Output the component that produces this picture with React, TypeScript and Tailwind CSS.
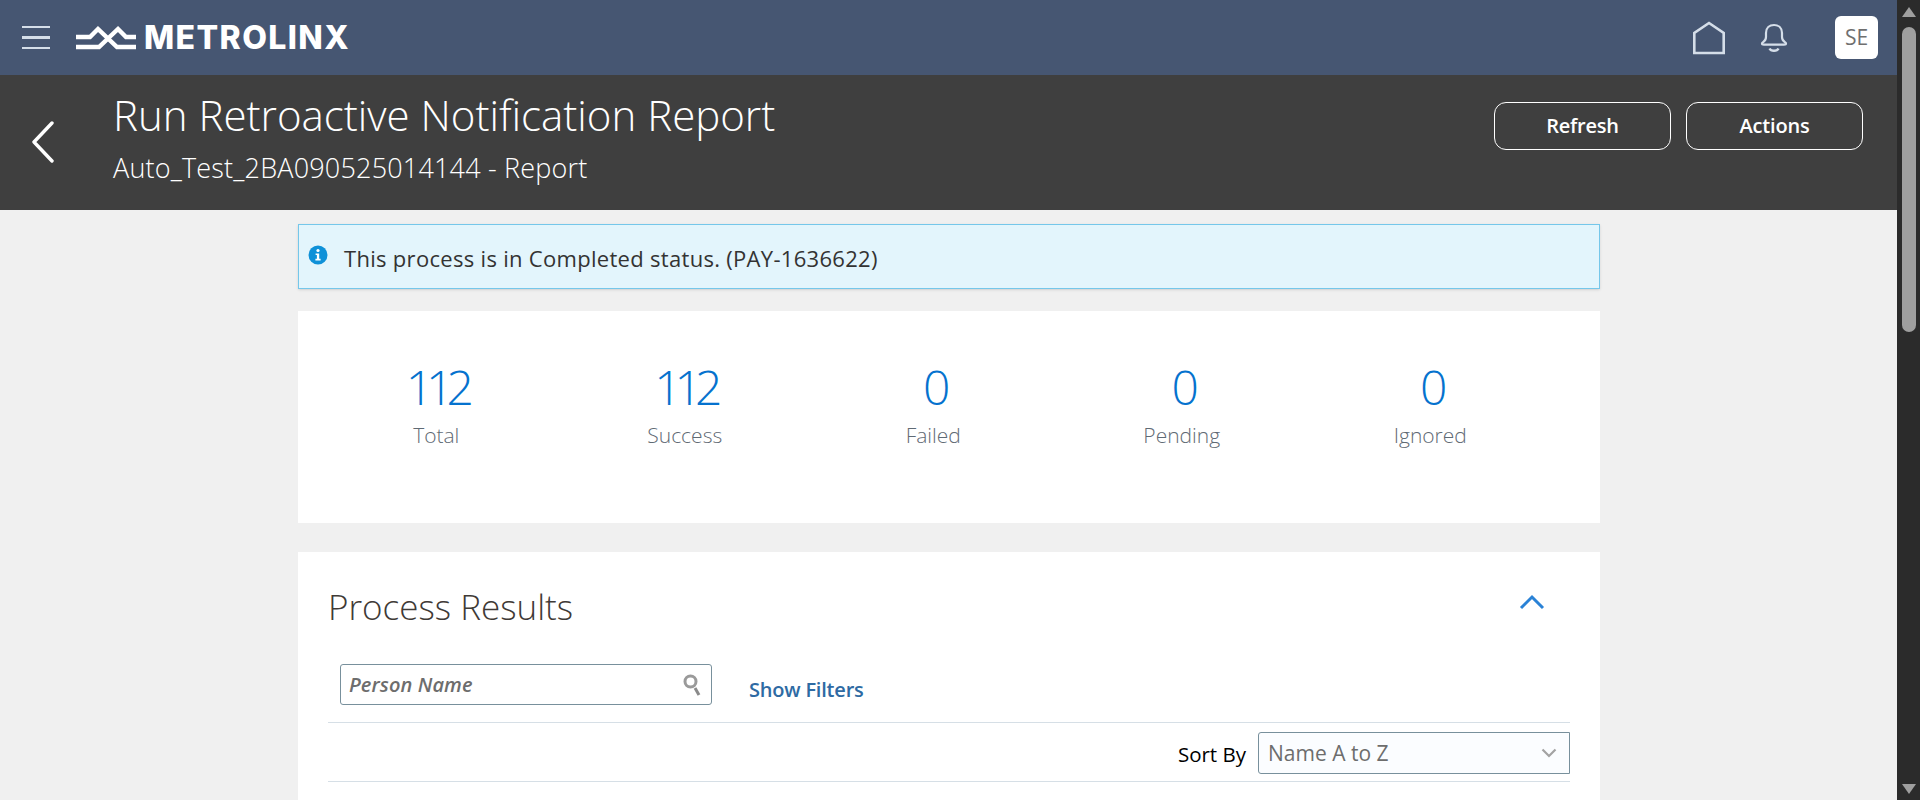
import React from "react";

function Logo() {
  return (
    <svg width="60" height="26" viewBox="0 0 60 26" fill="none" stroke="white" strokeWidth="4.4" className="shrink-0">
      <path d="M0 12 H14 L22 4 L41 22 H60" />
      <path d="M0 22 H23 L42 4 L50 12 H60" />
    </svg>
  );
}

function Stat({ value, label }: { value: string; label: string }) {
  return (
    <div className="w-[248.5px] flex flex-col items-center">
      <div className="text-[48px] leading-[56px] font-light tracking-[-7px] text-[#0572ce]">{value}</div>
      <div className="text-[21px] leading-[30px] font-light text-[#5f6a74] mt-[5px]">{label}</div>
    </div>
  );
}

export default function App() {
  return (
    <div className="h-[800px] w-[1920px] flex overflow-hidden bg-[#f0f0f0] font-['Open_Sans','Noto_Sans',sans-serif]">
      <div className="flex-1 min-w-0 flex flex-col">
        <header className="h-[75px] bg-[#465672] flex items-center pl-[22px] pr-[19px] shrink-0">
          <div className="flex flex-col gap-[8px] w-[28px] shrink-0">
            <div className="h-[2.5px] bg-[#d5dee9]" />
            <div className="h-[2.5px] bg-[#d5dee9]" />
            <div className="h-[2.5px] bg-[#d5dee9]" />
          </div>
          <div className="ml-[26px] flex items-center gap-[8px]">
            <Logo />
            <span className="text-[32px] font-['Inter',sans-serif] font-extrabold text-white tracking-[1.4px] leading-none">METROLINX</span>
          </div>
          <div className="flex-1" />
          <svg width="34" height="34" viewBox="0 0 34 34" fill="none" stroke="#d5dee9" strokeWidth="2.6" className="mr-[34px]">
            <path d="M2.3 32 V12 L17 2 L31.7 12 V32 Z" />
          </svg>
          <svg width="28" height="30" viewBox="0 0 28 30" fill="none" stroke="#d5dee9" strokeWidth="2.2" className="mr-[47px]">
            <path d="M2 20.5 C2 19 6 19 6 14 V10 C6 5 9.5 2 14 2 C18.5 2 22 5 22 10 V14 C22 19 26 19 26 20.5 C26 21.6 25 21.6 24 21.6 H4 C3 21.6 2 21.6 2 20.5 Z" />
            <path d="M9.5 25.5 C11 28.5 17 28.5 18.5 25.5" strokeWidth="2.4" />
          </svg>
          <div className="w-[43px] h-[43px] rounded-[6px] bg-white flex items-center justify-center text-[#6f6f6f] text-[21px]">SE</div>
        </header>

        <section className="h-[135px] bg-[#3f3f3f] flex shrink-0 relative">
          <div className="w-[113px] shrink-0 flex items-start pt-[46px] pl-[32px]">
            <svg width="22" height="42" viewBox="0 0 22 42" fill="none" stroke="white" strokeWidth="3.4" strokeLinecap="round" strokeLinejoin="round">
              <path d="M20 2 L2 21 L20 40" />
            </svg>
          </div>
          <div className="flex-1 pt-[12px]">
            <div className="text-[42px] leading-[56px] font-light text-white">Run Retroactive Notification Report</div>
            <div className="text-[27px] leading-[34px] font-light text-white tracking-[0.18px] mt-[8px]">Auto_Test_2BA090525014144 - Report</div>
          </div>
          <div className="flex gap-[15px] pt-[27px] pr-[34px]">
            <button className="w-[177px] h-[48px] rounded-[12px] border border-white text-white text-[20px] font-semibold tracking-[-0.2px]">Refresh</button>
            <button className="w-[177px] h-[48px] rounded-[12px] border border-white text-white text-[20px] font-semibold tracking-[-0.2px]">Actions</button>
          </div>
        </section>

        <main className="flex-1 min-h-0 overflow-hidden pl-[298px] pr-[297px] pt-[14px]">
          <div className="h-[65px] bg-[#e3f5fc] border border-[#75c7ea] flex items-center pl-[8px] text-[#333333] shadow-sm">
            <svg width="20" height="20" viewBox="0 0 20 20" className="shrink-0 -mt-[4px] ml-[1px]">
              <circle cx="10" cy="10" r="9.5" fill="#0f91d8" />
              <circle cx="10" cy="5.5" r="1.6" fill="white" />
              <path d="M7.6 8.5 H11.2 V13.8 H12.6 V15.4 H7.4 V13.8 H8.9 V10 H7.6 Z" fill="white" />
            </svg>
            <span className="ml-[16px] mt-[4px] text-[22px] tracking-[0.3px]">This process is in Completed status. (PAY-1636622)</span>
          </div>

          <div className="mt-[22px] h-[212px] bg-white flex pl-[14px] pt-[48px] items-start">
            <Stat value="112" label="Total" />
            <Stat value="112" label="Success" />
            <Stat value="0" label="Failed" />
            <Stat value="0" label="Pending" />
            <Stat value="0" label="Ignored" />
          </div>

          <div className="mt-[29px] h-[400px] bg-white px-[30px] pt-[30px]">
            <div className="flex items-center justify-between h-[50px]">
              <div className="text-[35px] leading-[50px] font-light text-[#3f3a36]">Process Results</div>
              <svg width="26" height="16" viewBox="0 0 26 16" fill="none" stroke="#2a82d6" strokeWidth="3" className="mr-[25px] -mt-[10px]">
                <path d="M2 14 L13 3 L24 14" />
              </svg>
            </div>
            <div className="flex items-start mt-[32px] h-[59px] border-b border-[#d6dfe6]">
              <div className="ml-[12px] w-[372px] h-[41px] rounded-[3px] border border-[#78909c] flex items-center justify-between px-[8px]">
                <span className="italic font-semibold text-[#6d6d6d] text-[20px] mt-[1px] tracking-[0.1px]">Person Name</span>
                <svg width="18" height="24" viewBox="0 0 18 24" fill="none" className="mr-[2px]">
                  <circle cx="7.5" cy="8.5" r="5.5" stroke="#9a9a9a" strokeWidth="3" />
                  <path d="M12 15 L16 22" stroke="#8a8a8a" strokeWidth="3" />
                </svg>
              </div>
              <span className="ml-[37px] mt-[11px] text-[#2e6aa3] text-[20px] font-semibold tracking-[-0.2px]">Show Filters</span>
            </div>
            <div className="flex items-center justify-end h-[59px] border-b border-[#d6dfe6]">
              <span className="text-black text-[20.5px] font-medium mt-[4px] mr-[12px]">Sort By</span>
              <div className="w-[312px] h-[42px] mt-[1px] rounded-l-[3px] bg-[#fbfdff] border border-[#78909c] flex items-center justify-between pl-[9px] pr-[12px]">
                <span className="text-[#6d6d6d] text-[21px] font-medium mt-[3px]">Name A to Z</span>
                <svg width="16" height="10" viewBox="0 0 16 10" fill="none" stroke="#a3a3a3" strokeWidth="2.2">
                  <path d="M1.5 1.5 L8 8 L14.5 1.5" />
                </svg>
              </div>
            </div>
          </div>
        </main>
      </div>

      <aside className="w-[23px] shrink-0 bg-[#2b2b2b] flex flex-col items-center justify-between">
        <div className="flex flex-col items-center w-full">
          <div className="mt-[7px] w-0 h-0 border-l-[7px] border-r-[7px] border-b-[10px] border-l-transparent border-r-transparent border-b-[#9f9f9f]" />
          <div className="mt-[10px] w-[14px] h-[305px] rounded-[7px] bg-[#9f9f9f]" />
        </div>
        <div className="mb-[6px] w-0 h-0 border-l-[7px] border-r-[7px] border-t-[10px] border-l-transparent border-r-transparent border-t-[#9f9f9f]" />
      </aside>
    </div>
  );
}
